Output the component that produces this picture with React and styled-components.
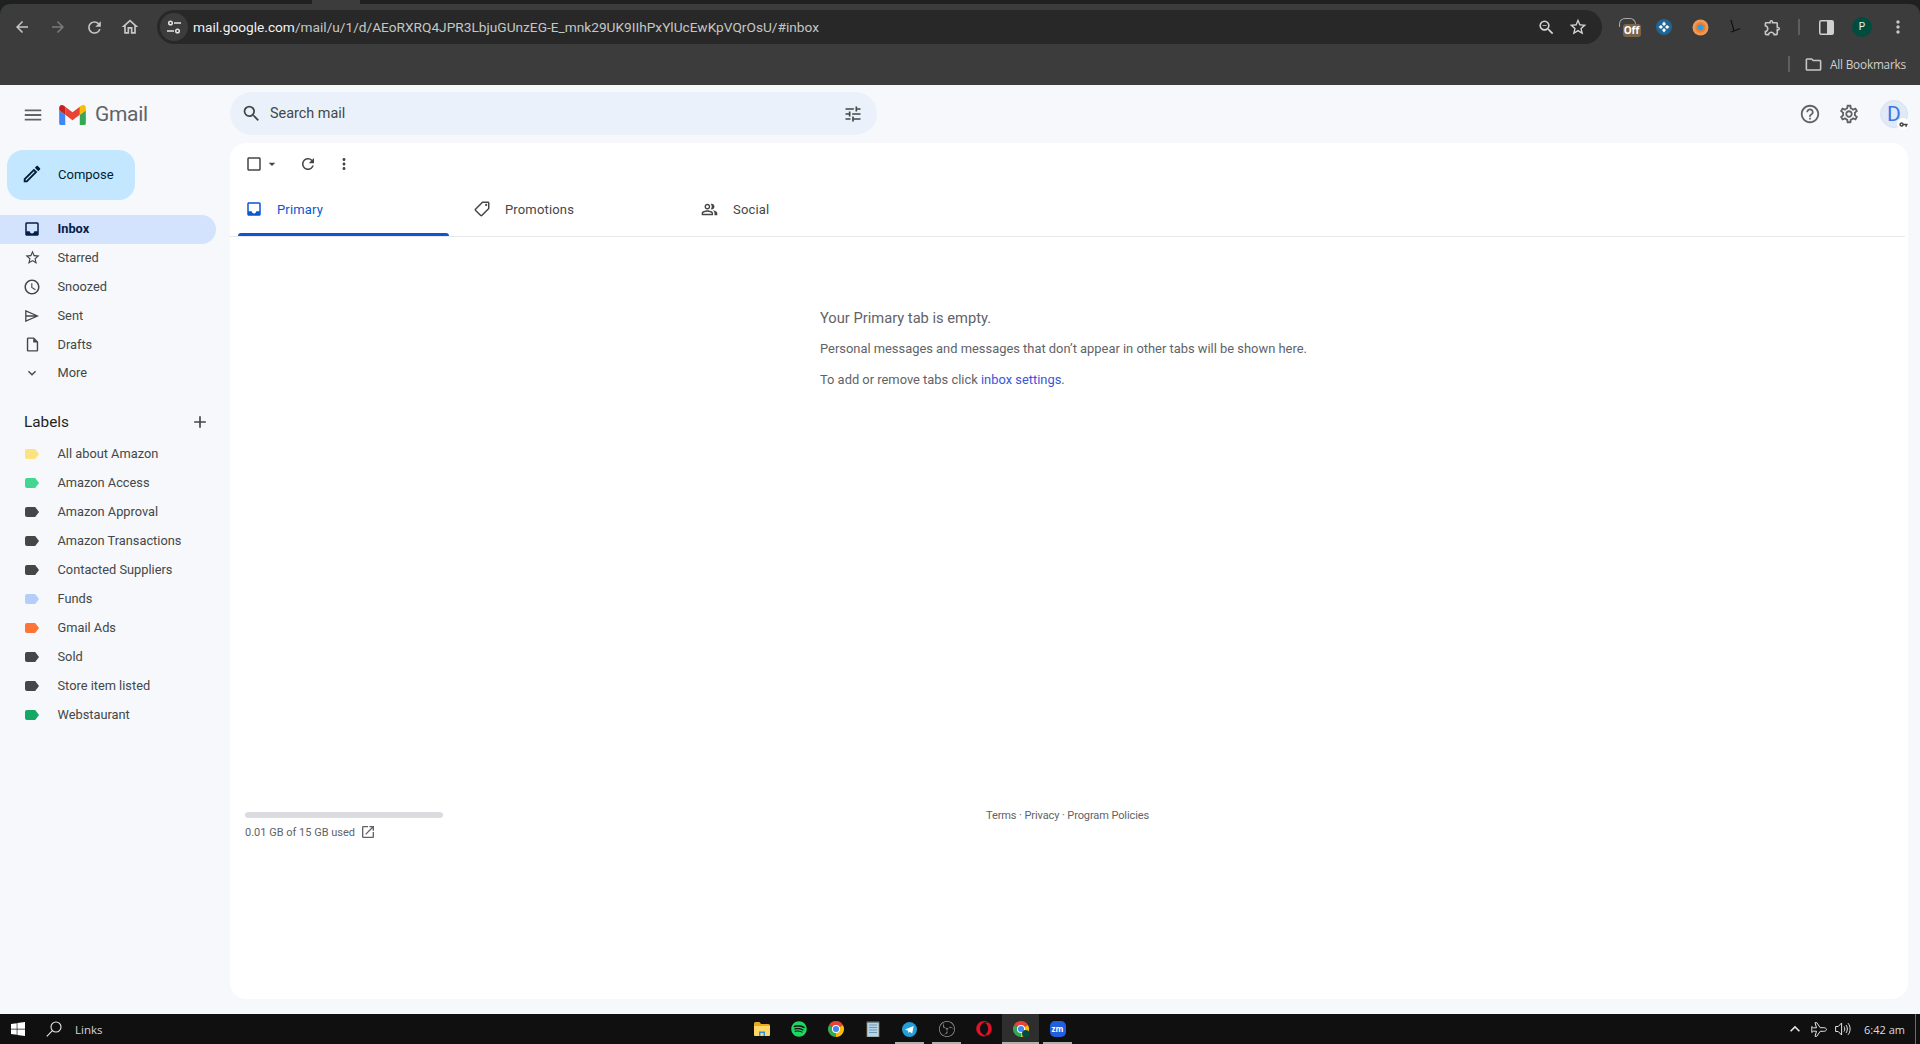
import React from "react";
import styled, { createGlobalStyle } from "styled-components";
import {
  MdArrowBack, MdArrowForward, MdRefresh, MdOutlineHome, MdTune, MdZoomOut, MdStarBorder,
  MdOutlineExtension, MdMoreVert, MdOutlineFolder, MdMenu, MdSearch, MdHelpOutline, MdOutlineSettings,
  MdOutlineEdit, MdInbox, MdOutlineWatchLater, MdOutlineInsertDriveFile, MdExpandMore, MdAdd,
  MdCheckBoxOutlineBlank, MdArrowDropDown, MdOutlineLocalOffer, MdOutlinePeopleAlt, MdOpenInNew,
  MdKeyboardArrowUp, MdVpnKey,
} from "react-icons/md";
import { FaWindows, FaSpotify, FaOpera } from "react-icons/fa";
import { SiObsstudio } from "react-icons/si";

const GlobalStyle = createGlobalStyle`
  html, body { margin: 0; padding: 0; height: 100%; overflow: hidden; }
  body { font-family: Roboto, "Liberation Sans", sans-serif; background: #f6f8fc; }
`;

const Page = styled.div`
  width: 1920px;
  height: 1044px;
  display: flex;
  flex-direction: column;
`;

/* browser chrome */
const Browser = styled.div`
  height: 85px;
  flex: none;
  background: #1f2120;
  display: flex;
  flex-direction: column;
`;
const TabStrip = styled.div`
  height: 4px;
  flex: none;
  padding-left: 312px;
`;
const TabPeak = styled.div`
  width: 48px;
  height: 4px;
  background: #3c3c3c;
`;
const BrowserBody = styled.div`
  flex: 1;
  background: #3c3c3c;
  border-radius: 10px 10px 0 0;
  display: flex;
  flex-direction: column;
`;
const NavRow = styled.div`
  height: 46px;
  flex: none;
  padding: 6px 4px 0;
  box-sizing: border-box;
  display: flex;
  align-items: flex-start;
`;
const NavButton = styled.div`
  width: ${(p) => p.$w || 36}px;
  height: 34px;
  flex: none;
  display: flex;
  align-items: center;
  justify-content: center;
  color: ${(p) => p.$color || "#c7c7c7"};
`;
const AddressBar = styled.div`
  flex: 1;
  height: 34px;
  margin: 0 11px 0 9px;
  border-radius: 17px;
  background: #282828;
  display: flex;
  align-items: center;
  padding: 0 8px 0 3px;
`;
const SiteInfo = styled.div`
  width: 28px;
  height: 28px;
  border-radius: 50%;
  background: #3c3c3c;
  color: #e3e3e3;
  display: flex;
  align-items: center;
  justify-content: center;
  flex: none;
`;
const Url = styled.div`
  margin-left: 5px;
  flex: 1;
  font-size: 13.7px;
  color: #c4c7c5;
  white-space: nowrap;
  b { color: #f1f1f1; font-weight: 400; }
`;
const AddressAction = styled.div`
  width: 32px;
  display: flex;
  justify-content: center;
  color: #d5d5d5;
`;
const OffBadge = styled.div`
  position: relative;
  width: 22px;
  height: 18px;
`;
const OffCap = styled.div`
  width: 15px;
  height: 8px;
  border: 1.5px solid #a9a9a9;
  border-bottom: none;
  border-radius: 6px 6px 0 0;
`;
const OffLabel = styled.span`
  position: absolute;
  right: 0;
  bottom: -1px;
  width: 18px;
  height: 13px;
  background: #7d6549;
  border-radius: 3px;
  color: #fff;
  font: 700 10px/13px "Open Sans", sans-serif;
  text-align: center;
`;
const Divider = styled.div`
  width: 2px;
  height: ${(p) => p.$h || 16}px;
  background: #5e5e5e;
`;
const ProfileDot = styled.div`
  width: 20px;
  height: 20px;
  border-radius: 50%;
  background: #004d3f;
  color: #e6f4ea;
  font-size: 10px;
  line-height: 20px;
  text-align: center;
`;
const BookmarkRow = styled.div`
  flex: 1;
  display: flex;
  align-items: center;
  justify-content: flex-end;
  padding: 0 14px 7px 0;
  gap: 6px;
  color: #c7c7c7;
`;
const BookmarkLabel = styled.span`
  margin-left: 1px;
  color: #d0d0d0;
  font-family: "Open Sans", sans-serif;
  font-size: 11.8px;
  letter-spacing: -0.2px;
`;
const BookmarkSep = styled(Divider)`
  margin-right: 8px;
`;

/* gmail shell */
const Gmail = styled.div`
  flex: 1;
  min-height: 0;
  display: flex;
  flex-direction: column;
  background: #f6f8fc;
`;
const Header = styled.header`
  height: 58px;
  flex: none;
  display: flex;
  align-items: center;
  padding-right: 12px;
  color: #444746;
`;
const Brand = styled.div`
  width: 230px;
  flex: none;
  display: flex;
  align-items: center;
  padding-left: 22px;
  box-sizing: border-box;
  margin-top: 1px;
  color: #5f6368;
  gap: 15px;
`;
const BrandName = styled.span`
  margin-left: -6px;
  margin-top: -1px;
  font-size: 21px;
  color: #5f6368;
  letter-spacing: -0.3px;
`;
const SearchBox = styled.div`
  width: 647px;
  height: 43px;
  margin-top: -1px;
  background: #eaf1fb;
  border-radius: 22px;
  display: flex;
  align-items: center;
  padding: 0 14px 0 11px;
  box-sizing: border-box;
  color: #444746;
`;
const SearchText = styled.span`
  margin-left: 8px;
  flex: 1;
  font-size: 14.4px;
`;
const HeaderActions = styled.div`
  margin-left: auto;
  display: flex;
  align-items: center;
  color: #5f6368;
`;
const HeaderIcon = styled.div`
  width: 39px;
  display: flex;
  justify-content: center;
`;
const Avatar = styled.div`
  position: relative;
  margin-left: 12px;
  margin-right: 0;
  width: 28px;
  height: 28px;
  border-radius: 50%;
  background: #e1e9f7;
  border: 1px solid #d6e2f5;
  box-sizing: border-box;
  color: #3b78e7;
  font-size: 21px;
  line-height: 26px;
  text-align: center;
`;
const KeyBadge = styled.span`
  position: absolute;
  right: -2px;
  bottom: -3px;
  width: 12px;
  height: 12px;
  border-radius: 50%;
  background: #fff;
  color: #444;
  display: flex;
  align-items: center;
  justify-content: center;
`;
const Body = styled.div`
  flex: 1;
  min-height: 0;
  display: flex;
  padding: 0 12px 15px 0;
`;

/* sidebar */
const Sidebar = styled.aside`
  width: 230px;
  flex: none;
`;
const Compose = styled.div`
  width: 128px;
  height: 50px;
  margin: 7px 0 15px 7px;
  border-radius: 16px;
  background: #c2e7ff;
  display: flex;
  align-items: center;
  padding: 0 0 2px 14px;
  box-sizing: border-box;
  color: #001d35;
  font-size: 13px;
  gap: 15px;
`;
const NavList = styled.nav`
  width: 216px;
`;
const NavItem = styled.div`
  height: ${(p) => p.$h || 29}px;
  display: flex;
  align-items: center;
  padding: 0 0 2px 22px;
  box-sizing: border-box;
  border-radius: 0 15px 15px 0;
  background: ${(p) => (p.$active ? "#d3e3fd" : "transparent")};
  color: ${(p) => (p.$active ? "#041e49" : "#444746")};
  font-size: 12.8px;
  font-weight: ${(p) => (p.$active ? 700 : 400)};
`;
const NavIconSlot = styled.span`
  width: 20px;
  margin-right: 15.5px;
  display: flex;
  align-items: center;
  justify-content: center;
`;
const LabelsHead = styled.div`
  display: flex;
  align-items: center;
  justify-content: space-between;
  height: 24px;
  margin-top: 23px;
  margin-bottom: 6px;
  padding: 0 6px 0 24px;
  font-size: 15.3px;
  color: #1f1f1f;
`;
const PlusIcon = styled.span`
  display: flex;
  color: #444746;
`;

/* main panel */
const Panel = styled.main`
  flex: 1;
  background: #fff;
  border-radius: 16px;
  display: flex;
  flex-direction: column;
`;
const PanelToolbar = styled.div`
  height: 41px;
  flex: none;
  display: flex;
  align-items: center;
  padding-left: 14px;
  color: #444746;
`;
const ToolSlot = styled.span`
  width: ${(p) => p.$w}px;
  margin-left: ${(p) => p.$gap || 0}px;
  display: flex;
  justify-content: center;
`;
const TabRow = styled.div`
  height: 52px;
  flex: none;
  display: flex;
  margin-right: 3px;
  padding-left: 8px;
  border-bottom: 1px solid #e6e8eb;
`;
const Tab = styled.div`
  position: relative;
  width: 228px;
  display: flex;
  align-items: center;
  padding: 0 0 2px 7px;
  box-sizing: border-box;
  gap: 12px;
  font-size: 13px;
  letter-spacing: 0.16px;
  color: ${(p) => (p.$active ? "#0b57d0" : "#444746")};
  ${(p) => p.$active && `
    &::after {
      content: "";
      position: absolute;
      left: 0;
      bottom: 0;
      width: 211px;
      height: 3px;
      border-radius: 3px 3px 0 0;
      background: #0b57d0;
    }
  `}
`;
const TabIcon = styled.span`
  width: 20px;
  display: flex;
  justify-content: flex-start;
`;
const Empty = styled.section`
  padding: 71px 0 0 590px;
  color: #5f6368;
  font-size: 12.9px;
`;
const EmptyTitle = styled.div`
  font-size: 14.7px;
  line-height: 20px;
`;
const EmptyLine = styled.p`
  margin: 11px 0 0;
  line-height: 20px;
`;
const Link = styled.span`
  color: #3b55d9;
`;
const PanelFooter = styled.footer`
  margin-top: auto;
  margin-bottom: 159px;
  padding-left: 15px;
  display: flex;
  align-items: flex-start;
  color: #5f6368;
  font-size: 11px;
`;
const Storage = styled.div`
  width: 198px;
  flex: none;
`;
const StorageTrack = styled.div`
  height: 6px;
  border-radius: 3px;
  background: #dadce0;
`;
const StorageText = styled.div`
  margin-top: 6px;
  display: flex;
  align-items: center;
  gap: 5px;
  height: 16px;
`;
const FooterLinks = styled.div`
  margin: -3px 0 0 543px;
  letter-spacing: -0.1px;
`;

/* windows taskbar */
const Taskbar = styled.div`
  height: 30px;
  flex: none;
  background: #101010;
  display: flex;
  align-items: center;
  color: #fff;
`;
const TaskLeft = styled.div`
  width: 743px;
  flex: none;
  display: flex;
  align-items: center;
  padding-left: 10px;
  box-sizing: border-box;
`;
const SearchGlyph = styled.span`
  display: flex;
  margin-left: 20px;
`;
const LinksLabel = styled.span`
  margin-left: 13px;
  font: 11.5px "Open Sans", sans-serif;
  color: #d6d6d6;
`;
const TaskCell = styled.div`
  position: relative;
  width: 37px;
  height: 30px;
  display: flex;
  align-items: center;
  justify-content: center;
  background: ${(p) => (p.$active ? "#2e2e2e" : "transparent")};
  &::after {
    content: "";
    display: ${(p) => (p.$running ? "block" : "none")};
    position: absolute;
    bottom: 0;
    left: ${(p) => (p.$active ? 0 : 4)}px;
    right: ${(p) => (p.$active ? 0 : 4)}px;
    height: 2px;
    background: #b3b0aa;
  }
`;
const Tray = styled.div`
  margin-left: auto;
  display: flex;
  align-items: center;
  color: #e4e4e4;
  height: 100%;
`;
const TraySlot = styled.span`
  width: 24px;
  display: flex;
  justify-content: center;
`;
const Clock = styled.span`
  margin-left: 9px;
  font: 11px "Open Sans", sans-serif;
  color: #dcdcdc;
`;
const ShowDesktop = styled.span`
  width: 1px;
  height: 100%;
  margin: 0 4px 0 10px;
  background: #6b6b6b;
`;
const ZoomTile = styled.span`
  width: 16px;
  height: 16px;
  border-radius: 5px;
  background: #1f5fe0;
  color: #fff;
  font: 700 8px/16px "Open Sans", sans-serif;
  text-align: center;
`;

function GmailLogo() {
  return (
    <svg width="27" height="20" viewBox="52 42 88 66">
      <path fill="#4285f4" d="M58 108h14V74L52 59v43c0 3.32 2.69 6 6 6" />
      <path fill="#34a853" d="M120 108h14c3.32 0 6-2.69 6-6V59l-20 15" />
      <path fill="#fbbc04" d="M120 48v26l20-15v-8c0-7.42-8.47-11.65-14.4-7.2" />
      <path fill="#ea4335" d="M72 74V48l24 18 24-18v26L96 92" />
      <path fill="#c5221f" d="M52 51v8l20 15V48l-5.6-4.2c-5.94-4.45-14.4-.22-14.4 7.2" />
    </svg>
  );
}

function ChromeLogo({ badge }) {
  return (
    <svg width="16" height="16" viewBox="0 0 24 24">
      <path fill="#ea4335" d="M12 12 1.6 6A12 12 0 0 1 22.4 6Z" />
      <path fill="#fbbc04" d="M12 12 22.4 6A12 12 0 0 1 12 24Z" />
      <path fill="#34a853" d="M12 12 12 24A12 12 0 0 1 1.6 6Z" />
      <circle cx="12" cy="12" r="6" fill="#fff" />
      <circle cx="12" cy="12" r="4.6" fill="#4285f4" />
      {badge && <circle cx="19" cy="19" r="5.5" fill="#004d3f" />}
    </svg>
  );
}

function LabelChip({ color }) {
  return (
    <svg width="14" height="10" viewBox="0 0 14 10">
      <path fill={color} d="M2 0h8.2L14 5l-3.8 5H2a2 2 0 0 1-2-2V2a2 2 0 0 1 2-2z" />
    </svg>
  );
}

function TuneCircle() {
  return (
    <svg width="16" height="16" viewBox="0 0 16 16" fill="none" stroke="currentColor" strokeWidth="1.5">
      <circle cx="4.5" cy="4" r="1.8" />
      <path d="M8 4h7M1 12h7" />
      <circle cx="11.5" cy="12" r="1.8" />
    </svg>
  );
}

function PinballExt() {
  return (
    <svg width="16" height="16" viewBox="0 0 16 16">
      <circle cx="8" cy="8" r="8" fill="#1f6695" />
      <path fill="#fff" d="M8 2.5 10 5 8 7 6 5zM8 9l2 2-2 2.5L6 11zM2.5 8 5 6l2 2-2 2zM9 8l2-2 2.5 2L11 10z" />
    </svg>
  );
}

function OrangeExt() {
  return (
    <svg width="17" height="17" viewBox="0 0 17 17">
      <circle cx="8.5" cy="8.5" r="8" fill="#f0975a" />
      <circle cx="8.5" cy="8.5" r="5.2" fill="#f57d28" />
      <circle cx="8.5" cy="8.5" r="3" fill="#26a3e8" />
    </svg>
  );
}

function LineExt() {
  return (
    <svg width="12" height="16" viewBox="0 0 12 16" fill="none" stroke="#111" strokeWidth="1.2">
      <path d="M1 1 4 12 10 9.5M4 12 1 13" />
    </svg>
  );
}

function SidePanelIcon() {
  return (
    <svg width="15" height="15" viewBox="0 0 15 15">
      <rect x="0.75" y="0.75" width="13.5" height="13.5" rx="1.5" fill="none" stroke="#d0d0d0" strokeWidth="1.5" />
      <rect x="8" y="1" width="6" height="13" fill="#d0d0d0" />
    </svg>
  );
}

function SentIcon() {
  return (
    <svg width="14" height="12" viewBox="0 0 14 12" fill="none" stroke="currentColor" strokeWidth="1.3">
      <path d="M.8.9 12.6 6 .8 11.1zM.8 6h11.8" />
    </svg>
  );
}

function FolderTile() {
  return (
    <svg width="16" height="14" viewBox="0 0 16 14">
      <path fill="#e8a91f" d="M0 1.5A1.5 1.5 0 0 1 1.5 0h4L7 2h7.5A1.5 1.5 0 0 1 16 3.5v9a1.5 1.5 0 0 1-1.5 1.5h-13A1.5 1.5 0 0 1 0 12.5z" />
      <path fill="#ffd768" d="M0 4h16v8.5a1.5 1.5 0 0 1-1.5 1.5h-13A1.5 1.5 0 0 1 0 12.5z" />
      <path fill="#2f8fd8" d="M5 14V9.5h6V14H9.5v-3h-3v3z" />
    </svg>
  );
}

function NotepadTile() {
  return (
    <svg width="15" height="16" viewBox="0 0 15 16">
      <rect x="2" y="1" width="12" height="15" fill="#b5d6e8" stroke="#8c7f60" strokeWidth="0.8" />
      <path stroke="#5f8aa3" strokeWidth="0.8" d="M4 4h8M4 6.5h8M4 9h8M4 11.5h8" />
      <path stroke="#3d5a6c" strokeWidth="1" d="M3 0v2M5 0v2M7 0v2M9 0v2M11 0v2M13 0v2" />
    </svg>
  );
}

function TelegramTile() {
  return (
    <svg width="15" height="15" viewBox="0 0 15 15">
      <circle cx="7.5" cy="7.5" r="7.5" fill="#229ed9" />
      <path fill="#fff" d="M3 7.4 11.6 4l-1.4 7.4-2.5-1.7-1.3 1.3-.4-2.3z" />
    </svg>
  );
}

function TaskSearchIcon() {
  return (
    <svg width="16" height="16" viewBox="0 0 16 16" fill="none" stroke="#e8e8e8" strokeWidth="1.1">
      <circle cx="10" cy="6" r="5" />
      <path d="M6.4 9.6.8 15.4" />
    </svg>
  );
}

function PlaneIcon() {
  return (
    <svg width="16" height="15" viewBox="0 0 16 15" fill="none" stroke="currentColor" strokeWidth="1">
      <path d="M.8 4.5 2.3 5.8h3.2L4 .7h1.8l3.4 5h3.6c1.3 0 2.7.8 2.7 1.8s-1.4 1.8-2.7 1.8H9.2l-3.4 5H4l1.5-5.1H2.3L.8 10.5z" />
    </svg>
  );
}

function VolumeIcon() {
  return (
    <svg width="16" height="14" viewBox="0 0 16 14" fill="none" stroke="currentColor" strokeWidth="1">
      <path d="M.6 4.5h2.6L6.6 1v12L3.2 9.5H.6zM9 4.5c1 1.3 1 3.7 0 5M11 3c1.8 2.2 1.8 5.8 0 8M13 1.2c2.8 3.2 2.8 8.4 0 11.6" />
    </svg>
  );
}

const navItems = [
  { name: "Starred", icon: <MdStarBorder size={17} /> },
  { name: "Snoozed", icon: <MdOutlineWatchLater size={18} /> },
  { name: "Sent", icon: <SentIcon /> },
  { name: "Drafts", icon: <MdOutlineInsertDriveFile size={17} /> },
];

const labels = [
  ["All about Amazon", "#fde27f"],
  ["Amazon Access", "#42d692"],
  ["Amazon Approval", "#444746"],
  ["Amazon Transactions", "#444746"],
  ["Contacted Suppliers", "#444746"],
  ["Funds", "#b3cefb"],
  ["Gmail Ads", "#ff7537"],
  ["Sold", "#444746"],
  ["Store item listed", "#444746"],
  ["Webstaurant", "#16a766"],
];

const taskApps = [
  { key: "files", icon: <FolderTile /> },
  { key: "spotify", icon: <FaSpotify size={16} color="#1ed760" /> },
  { key: "chrome", icon: <ChromeLogo /> },
  { key: "notes", icon: <NotepadTile /> },
  { key: "telegram", running: true, icon: <TelegramTile /> },
  { key: "obs", running: true, icon: <SiObsstudio size={16} color="#9a9a9a" /> },
  { key: "opera", icon: <FaOpera size={16} color="#e0112b" /> },
  { key: "chrome2", running: true, active: true, icon: <ChromeLogo badge /> },
  { key: "zoom", running: true, icon: <ZoomTile>zm</ZoomTile> },
];

export default function App() {
  return (
    <Page>
      <GlobalStyle />
      <Browser>
        <TabStrip><TabPeak /></TabStrip>
        <BrowserBody>
          <NavRow>
            <NavButton><MdArrowBack size={18} /></NavButton>
            <NavButton $color="#7b7b7b"><MdArrowForward size={18} /></NavButton>
            <NavButton><MdRefresh size={19} /></NavButton>
            <NavButton><MdOutlineHome size={20} /></NavButton>
            <AddressBar>
              <SiteInfo><TuneCircle /></SiteInfo>
              <Url><b>mail.google.com</b>/mail/u/1/d/AEoRXRQ4JPR3LbjuGUnzEG-E_mnk29UK9IIhPxYlUcEwKpVQrOsU/#inbox</Url>
              <AddressAction><MdZoomOut size={19} /></AddressAction>
              <AddressAction><MdStarBorder size={20} /></AddressAction>
            </AddressBar>
            <NavButton $w={33}><OffBadge><OffCap /><OffLabel>Off</OffLabel></OffBadge></NavButton>
            <NavButton><PinballExt /></NavButton>
            <NavButton><OrangeExt /></NavButton>
            <NavButton><LineExt /></NavButton>
            <NavButton><MdOutlineExtension size={19} /></NavButton>
            <NavButton $w={18}><Divider /></NavButton>
            <NavButton><SidePanelIcon /></NavButton>
            <NavButton><ProfileDot>P</ProfileDot></NavButton>
            <NavButton><MdMoreVert size={20} /></NavButton>
          </NavRow>
          <BookmarkRow>
            <BookmarkSep />
            <MdOutlineFolder size={19} />
            <BookmarkLabel>All Bookmarks</BookmarkLabel>
          </BookmarkRow>
        </BrowserBody>
      </Browser>

      <Gmail>
        <Header>
          <Brand>
            <MdMenu size={22} />
            <GmailLogo />
            <BrandName>Gmail</BrandName>
          </Brand>
          <SearchBox>
            <MdSearch size={21} />
            <SearchText>Search mail</SearchText>
            <MdTune size={20} />
          </SearchBox>
          <HeaderActions>
            <HeaderIcon><MdHelpOutline size={22} /></HeaderIcon>
            <HeaderIcon><MdOutlineSettings size={22} /></HeaderIcon>
            <Avatar>D<KeyBadge><MdVpnKey size={9} /></KeyBadge></Avatar>
          </HeaderActions>
        </Header>

        <Body>
          <Sidebar>
            <Compose><MdOutlineEdit size={22} />Compose</Compose>
            <NavList>
              <NavItem $active>
                <NavIconSlot><MdInbox size={18} /></NavIconSlot>Inbox
              </NavItem>
              {navItems.map((item) => (
                <NavItem key={item.name}>
                  <NavIconSlot>{item.icon}</NavIconSlot>{item.name}
                </NavItem>
              ))}
              <NavItem $h={27}>
                <NavIconSlot><MdExpandMore size={16} /></NavIconSlot>More
              </NavItem>
              <LabelsHead>
                Labels
                <PlusIcon><MdAdd size={20} /></PlusIcon>
              </LabelsHead>
              {labels.map(([name, color]) => (
                <NavItem key={name}>
                  <NavIconSlot><LabelChip color={color} /></NavIconSlot>{name}
                </NavItem>
              ))}
            </NavList>
          </Sidebar>

          <Panel>
            <PanelToolbar>
              <ToolSlot $w={20}><MdCheckBoxOutlineBlank size={18} /></ToolSlot>
              <ToolSlot $w={16}><MdArrowDropDown size={18} /></ToolSlot>
              <ToolSlot $w={24} $gap={16}><MdRefresh size={18} /></ToolSlot>
              <ToolSlot $w={24} $gap={12}><MdMoreVert size={18} /></ToolSlot>
            </PanelToolbar>
            <TabRow>
              <Tab $active><TabIcon><MdInbox size={18} /></TabIcon>Primary</Tab>
              <Tab><TabIcon><MdOutlineLocalOffer size={18} style={{ transform: "scaleX(-1)" }} /></TabIcon>Promotions</Tab>
              <Tab><TabIcon><MdOutlinePeopleAlt size={17} /></TabIcon>Social</Tab>
            </TabRow>
            <Empty>
              <EmptyTitle>Your Primary tab is empty.</EmptyTitle>
              <EmptyLine>Personal messages and messages that don’t appear in other tabs will be shown here.</EmptyLine>
              <EmptyLine>To add or remove tabs click <Link>inbox settings</Link>.</EmptyLine>
            </Empty>
            <PanelFooter>
              <Storage>
                <StorageTrack />
                <StorageText>0.01 GB of 15 GB used <MdOpenInNew size={16} /></StorageText>
              </Storage>
              <FooterLinks>Terms · Privacy · Program Policies</FooterLinks>
            </PanelFooter>
          </Panel>
        </Body>
      </Gmail>

      <Taskbar>
        <TaskLeft>
          <FaWindows size={16} />
          <SearchGlyph><TaskSearchIcon /></SearchGlyph>
          <LinksLabel>Links</LinksLabel>
        </TaskLeft>
        {taskApps.map((app) => (
          <TaskCell key={app.key} $running={app.running} $active={app.active}>{app.icon}</TaskCell>
        ))}
        <Tray>
          <TraySlot><MdKeyboardArrowUp size={20} /></TraySlot>
          <TraySlot><PlaneIcon /></TraySlot>
          <TraySlot><VolumeIcon /></TraySlot>
          <Clock>6:42 am</Clock>
          <ShowDesktop />
        </Tray>
      </Taskbar>
    </Page>
  );
}
